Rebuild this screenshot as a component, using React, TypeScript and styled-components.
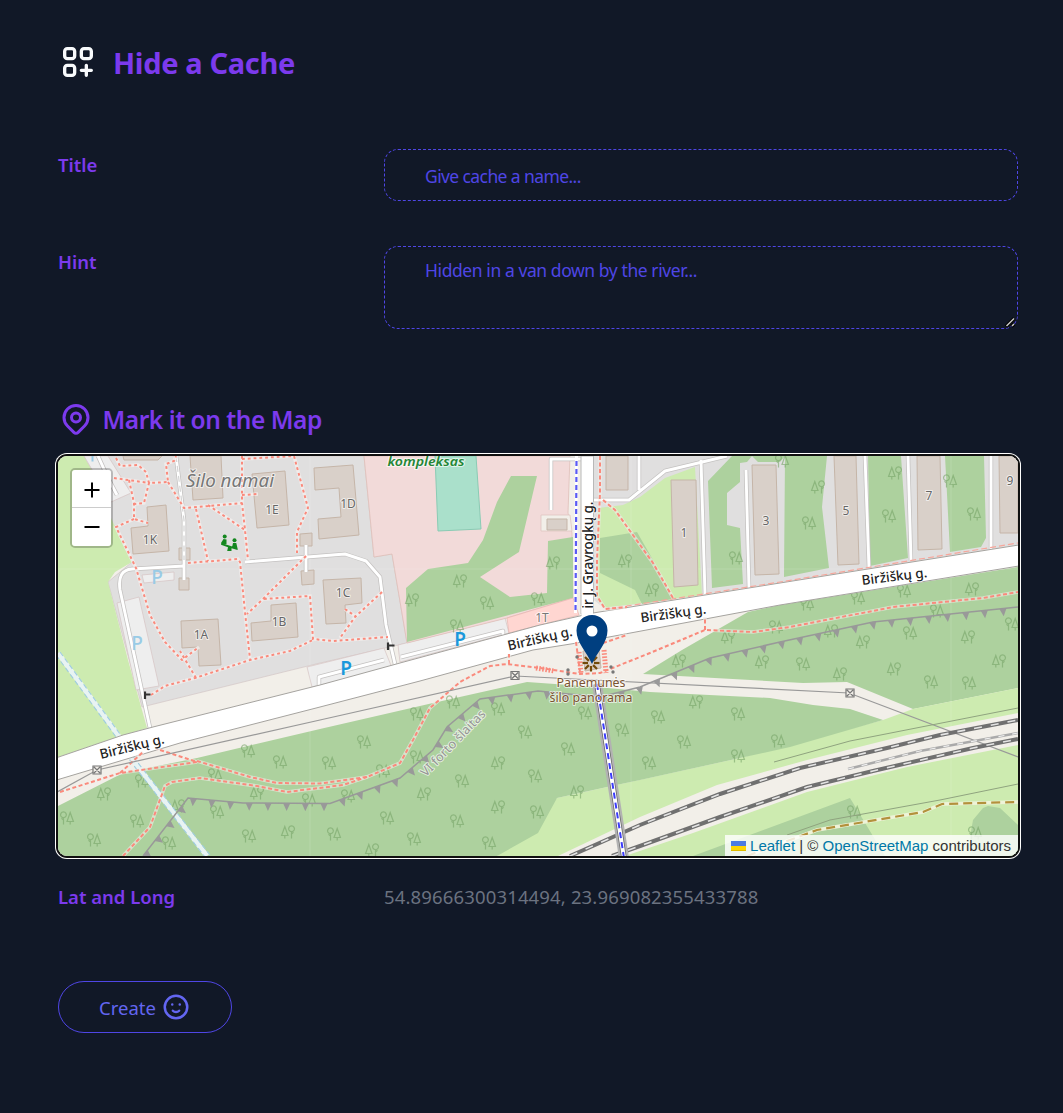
import React from "react";
import styled, { createGlobalStyle } from "styled-components";

const GlobalStyle = createGlobalStyle`
  *, *::before, *::after { box-sizing: border-box; }
  body {
    margin: 0;
    background: #111827;
    font-family: "Noto Sans", "Open Sans", sans-serif;
  }
`;

const Page = styled.main`
  width: 1063px;
  min-height: 1113px;
  padding: 42px 45px 80px 58px;
  background: #111827;
`;

const Header = styled.header`
  display: flex;
  align-items: center;
  gap: 15px;
  height: 40px;
  color: #f8fafc;
`;

const Title = styled.h1`
  margin: 1px 0 0;
  color: #7c3aed;
  font-size: 29px;
  line-height: 40px;
  font-weight: 700;
  letter-spacing: -0.35px;
`;

const Form = styled.form`
  display: flex;
  flex-direction: column;
  padding-top: 67px;
`;

const Row = styled.div<{ $gap?: number }>`
  display: grid;
  grid-template-columns: 326px 1fr;
  align-items: start;
  margin-bottom: ${(p) => p.$gap ?? 0}px;
`;

const Label = styled.label`
  padding-top: 2px;
  color: #7c3aed;
  font-size: 18.5px;
  line-height: 28px;
  font-weight: 600;
`;

const fieldFont = `
  font-family: "Noto Sans", "Open Sans", sans-serif;
  font-size: 17.5px;
  font-weight: 400;
`;

const TextField = styled.input`
  ${fieldFont}
  width: 100%;
  height: 52px;
  padding: 2px 40px 0;
  border: 1px dashed #4f46e5;
  border-radius: 14px;
  background: transparent;
  color: #4f46e5;
  letter-spacing: -0.6px;
  outline: none;
  &::placeholder { color: #4f46e5; opacity: 1; }
`;

const TextAreaBox = styled.div`
  position: relative;
`;

const TextArea = styled.textarea`
  ${fieldFont}
  display: block;
  width: 100%;
  height: 83px;
  padding: 10px 40px;
  border: 1px dashed #4f46e5;
  border-radius: 14px;
  background: transparent;
  color: #4f46e5;
  line-height: 26px;
  letter-spacing: -0.42px;
  outline: none;
  resize: none;
  &::placeholder { color: #4f46e5; opacity: 1; }
`;

const Grip = styled.svg`
  position: absolute;
  right: 2px;
  bottom: 1px;
  pointer-events: none;
`;

const SectionHead = styled.div`
  display: flex;
  align-items: center;
  gap: 9px;
  height: 36px;
  margin-bottom: 19px;
  color: #7c3aed;
  svg { margin: -1px 0 0 -0.5px; }
`;

const SectionTitle = styled.h2`
  margin: 1px 0 0;
  font-size: 24.5px;
  line-height: 36px;
  font-weight: 600;
  letter-spacing: -0.46px;
`;

const MapFrame = styled.div`
  position: relative;
  width: 960px;
  height: 400px;
  margin-bottom: 25px;
  border-radius: 9px;
  box-shadow: 0 0 0 2px #101010, 0 0 0 3px #fff;
`;

const MapClip = styled.div`
  height: 400px;
  overflow: hidden;
  border-radius: 9px;
  svg { display: block; }
`;

const ZoomBar = styled.div`
  position: absolute;
  top: 12px;
  left: 12px;
  width: 43px;
  border: 2px solid rgba(0, 0, 0, 0.22);
  border-radius: 5px;
  overflow: hidden;
  background-clip: padding-box;
`;

const ZoomButton = styled.button`
  display: flex;
  align-items: center;
  justify-content: center;
  width: 100%;
  height: 37px;
  padding: 2px 0 0;
  border: 0;
  background: #fff;
  & + & { height: 39px; padding: 0; border-top: 1px solid #ccc; }
`;

const Attribution = styled.div`
  position: absolute;
  right: 0;
  bottom: 0;
  display: flex;
  align-items: center;
  height: 21px;
  padding: 0 7px 0 6px;
  border-bottom-right-radius: 9px;
  background: rgba(255, 255, 255, 0.8);
  color: #333;
  font-family: "Liberation Sans", Arial, sans-serif;
  font-size: 15px;
  white-space: pre;
  a { color: #0078a8; text-decoration: none; }
  svg { margin-right: 4px; }
`;

const Coordinates = styled.output`
  padding-top: 2px;
  color: #6b7280;
  font-size: 18.5px;
  line-height: 28px;
  letter-spacing: 0.15px;
`;

const CreateButton = styled.button`
  display: flex;
  align-items: center;
  align-self: flex-start;
  gap: 5px;
  width: 174px;
  height: 52px;
  padding: 0 40px;
  border: 1px solid #4f46e5;
  border-radius: 26px;
  background: transparent;
  color: #6366f1;
  font-family: "Noto Sans", "Open Sans", sans-serif;
  font-size: 18.5px;
  white-space: nowrap;
  svg { flex: none; }
`;

type Pt = [number, number];

const ridge: Pt[] = [
  [143, 856], [188, 798], [243, 803], [330, 803.5], [400, 778], [433, 750], [447, 727],
  [480, 699], [538, 691], [600, 697], [640, 687], [710, 658], [780, 642], [873, 622], [1018, 607],
];

function ridgeTeeth(points: Pt[], step: number): string {
  let out = "";
  let next = 4;
  let travelled = 0;
  for (let i = 1; i < points.length; i++) {
    const [ax, ay] = points[i - 1];
    const [bx, by] = points[i];
    const len = Math.hypot(bx - ax, by - ay);
    const ux = (bx - ax) / len;
    const uy = (by - ay) / len;
    while (next <= travelled + len) {
      const d = next - travelled;
      const x = ax + ux * d;
      const y = ay + uy * d;
      out += `M${x - ux * 3.6} ${y - uy * 3.6}L${x + ux * 3.6} ${y + uy * 3.6}L${x - uy * 7.8} ${y + ux * 7.8}Z`;
      next += step;
    }
    travelled += len;
  }
  return out;
}

/* Round crown first */
const treesA: Pt[] = [
  [487, 603], [457, 626], [538, 599], [736, 558], [809, 523], [889, 516], [950, 481], [974, 514],
  [782, 461], [807, 604], [858, 598], [904, 591], [937, 611], [776, 627], [910, 633], [1012, 624],
  [248, 751], [280, 762], [142, 781], [215, 775], [67, 818], [137, 821], [217, 812], [309, 800],
  [249, 836], [94, 840], [169, 843], [364, 742], [329, 763], [417, 714], [453, 702], [498, 709],
  [525, 732], [568, 749], [585, 713], [622, 730], [417, 757], [383, 771], [462, 781], [535, 776],
  [348, 796], [537, 812], [457, 821], [387, 818], [334, 834], [414, 839], [489, 843], [803, 664],
  [931, 682], [969, 683], [658, 717], [738, 714], [684, 742], [778, 741], [649, 763], [738, 756],
  [854, 812], [975, 833],
];

/* Pointed crown first */
const treesB: Pt[] = [
  [460, 581], [412, 600], [553, 563], [625, 561], [652, 590], [728, 637], [679, 661], [818, 487],
  [895, 473], [972, 589], [831, 631], [863, 642], [968, 637], [104, 794], [178, 806], [257, 793],
  [288, 832], [498, 763], [424, 794], [498, 807], [372, 850], [577, 792], [762, 662], [840, 674],
  [894, 669], [999, 661], [696, 702],
];

const treePath = "M-3.5 6.5V-.5M-3.5 2L-5.5 .3M-3.5 -.3a2.900 2.900 0 1 0 -.1 0M3.200 6.500V3.500M0 3.500L3.200 -5.500L6.400 3.500Z";

const buildings: string[] = [
  "M123 456H162L158 460L124 460Z",
  "M190 456H221L223 498L193 500Z",
  "M252 474L285 471L289 525L257 528Z",
  "M314 468L353 465L359 535L319 539L318 519L341 517L339 488L315 490Z",
  "M147 507L166 505L169 551L133 554L131 528L148 526Z",
  "M179 548H190V560H179ZM179 578H189V590H179Z",
  "M300 534L312 533V546H300ZM301 571L314 570V584L302 585Z",
  "M323 580L361 578L362 603L345 605L346 623L326 624Z",
  "M271 605L296 603L298 637L252 641L251 623L271 621Z",
  "M181 621L218 619L221 665L199 666L198 647L182 648Z",
  "M547 519H567V530H547Z",
  "M606 456H628V490H606Z",
  "M671 480H696L698 585L674 587Z",
  "M752 465H776L779 574L755 575Z",
  "M834 456H856L859 564L838 565Z",
  "M917 456H940L942 549L918 550Z",
  "M999 456H1018V533H1000Z",
];

const dotted: string[] = [
  "M116 458L120 466L138 465L146 472L149 483L168 482L166 464L174 461L176 456",
  "M114 478L149 483L144 503L135 504",
  "M129 480L134 503L134 519L148 523M134 519L116 527L136 568L150 615L165 642L182 660L199 647",
  "M168 482L184 508L242 503M196 509L208 561M208 505L245 530",
  "M242 456L242 503L245 530L248 560",
  "M242 459L294 456L308 508L297 532V553",
  "M242 495L258 494",
  "M188 563L238 559L240 562L245 612L250 659",
  "M306 556L262 600L247 614M264 599L310 596L313 639L333 641L388 637",
  "M382 592L355 617L340 638M345 609L355 616",
  "M151 695L165 686L195 678L250 660L290 651L313 640M196 678L180 651",
];

const footways: string[] = [
  "M60 792L120 773L197 762L157 749M120 773L143 752",
  "M197 761L250 777L277 783L320 783.500L367 777L400 763L413 740L430 708L460 682L490 666L507 664L540 668L580 674L600 673L650 653L705 630L753 632L790 627L893 607L983 598L1018 592",
  "M705 630V617M509 664V654",
  "M123 856L150 827L165 786L172 782L200 778L257 786L287 792L343 785L367 777",
  "M603 500L615 510L653 563L673 598",
  "M600 456L600 493L597 560L597 596L605 609L627 607",
  "M576 642L580 672M603 643L627 635",
];

const serviceRoads: string[] = [
  "M98 456L108 478L117 495",
  "M176 456L184 520L184 580",
  "M150 728L120 590Q117 570 132 569L184 566M245 562L345 554L366 561L380 577L386 625L395 664",
  "M306 545V572",
  "M319 685V677L384 660M401 657L503 631V635",
  "M551 510V459H581",
  "M593 500H629L665 471L727 456M639 456V490",
  "M701 460L705 594M746 470L749 588",
  "M865 456L869 568M908 456L911 561M991 456V549",
];

const railNorth = "M570 856L640 825L720 794L800 768L887 748L940 735L1018 720";
const railSouth = "M612 856L640 846L720 817L807 787L873 771L973 748L1018 739";
const railSiding = "M848 769L920 751L1018 733";

interface MapLabel { x: number; y: number; text: string; size: number; fill: string; rotate?: number; italic?: boolean; weight?: number; width?: number; }

const labels: MapLabel[] = [
  { x: 230, y: 487, text: "Šilo namai", size: 17.5, fill: "#777", italic: true, width: 88 },
  { x: 426, y: 466, text: "kompleksas", size: 12, fill: "#238636", italic: true, weight: 600, width: 77 },
  { x: 150, y: 544, text: "1K", size: 12, fill: "#666" },
  { x: 272, y: 514, text: "1E", size: 12, fill: "#666" },
  { x: 348, y: 508, text: "1D", size: 12, fill: "#666" },
  { x: 343, y: 597, text: "1C", size: 12, fill: "#666" },
  { x: 279, y: 626, text: "1B", size: 12, fill: "#666" },
  { x: 201, y: 639, text: "1A", size: 12, fill: "#666" },
  { x: 542, y: 622, text: "1T", size: 12, fill: "#777" },
  { x: 684, y: 537, text: "1", size: 12, fill: "#666" },
  { x: 766, y: 525, text: "3", size: 12, fill: "#666" },
  { x: 846, y: 515, text: "5", size: 12, fill: "#666" },
  { x: 929, y: 500, text: "7", size: 12, fill: "#666" },
  { x: 1010, y: 485, text: "9", size: 12, fill: "#666" },
  { x: 133, y: 751, text: "Biržiškų g.", size: 13.5, fill: "#222", rotate: -14, weight: 500, width: 66 },
  { x: 541, y: 643, text: "Biržiškų g.", size: 13.5, fill: "#222", rotate: -13, weight: 500, width: 66 },
  { x: 674, y: 618, text: "Biržiškų g.", size: 13.5, fill: "#222", rotate: -8, weight: 500, width: 66 },
  { x: 895, y: 581, text: "Biržiškų g.", size: 13.5, fill: "#222", rotate: -7, weight: 500, width: 66 },
  { x: 593, y: 555, text: "ir J. Gravrogkų g.", size: 13.5, fill: "#222", rotate: -90, weight: 500, width: 107 },
  { x: 456, y: 746, text: "VI forto šlaitas", size: 12.5, fill: "#949494", rotate: -46, width: 87 },
  { x: 591, y: 687, text: "Panemunės", size: 12.5, fill: "#7a5330", width: 69 },
  { x: 591, y: 702, text: "šilo panorama", size: 12.5, fill: "#7a5330", width: 83 },
];

const parking: { x: number; y: number; faded?: boolean }[] = [
  { x: 157, y: 584, faded: true },
  { x: 137, y: 650, faded: true },
  { x: 346, y: 675 },
  { x: 460, y: 646 },
];

function StreetMap() {
  return (
    <svg width="960" height="400" viewBox="58 456 960 400" fontFamily='"Noto Sans", sans-serif'>
      <rect x="58" y="456" width="960" height="400" fill="#f2efe9" />

      {/* Land use */}
      <path d="M84 456H364L374 557L392 554L407 643L320 663L142 707L108 582L132 562L84 470Z" fill="#e0dfdf" stroke="#d3c5c5" strokeWidth=".7" />
      <path d="M58 456H84L97 480L111 518L132 562L115 572L108 582L128 660L147 728L58 757Z" fill="#cdebb0" />
      <path d="M84 456H108L131 493L111 502Z M117 603L139 597L159 686L136 690Z M142 575L174 572V580L144 583Z" fill="#eee" stroke="#d5c3c3" strokeWidth=".7" />
      <path d="M307 667L384 648L392 668L312 687Z M398 645L505 618L509 633L400 662Z" fill="#eee" stroke="#d5c3c3" strokeWidth=".7" />
      <path d="M364 456H570L568 513L572 533L573 598L507 618L407 643L392 554L374 557Z" fill="#f2dad9" stroke="#dfbfb9" strokeWidth=".8" />
      <path d="M541 515H570L572 531L541 531Z" fill="#f2efe9" stroke="#e0c5c0" strokeWidth=".8" />
      <path d="M511 476H537L519 552L480 577L510 597L547 593L548 541L573 537V598L407 642L406 588L428 569L468 563L483 540L497 502Z" fill="#add19e" />
      <path d="M507 618L573 598L579 615L509 633Z" fill="#ffd6d1" stroke="#e8b5b0" strokeWidth=".7" />
      <path d="M435 456H476L481 529L438 531Z" fill="#aae0cb" stroke="#8acbb4" strokeWidth="1" />
      <path d="M594 456H1018V545L780 583L605 609L594 600Z" fill="#e0dfdf" />
      <path d="M598 508L623 505L640 497L665 478L695 467L702 595L605 608L597 600Z" fill="#cdebb0" />
      <path d="M600 538L637 532L653 560L673 599L642 604L635 590L600 573Z" fill="#add19e" />
      <path d="M708 481L732 456H752L747 462L740 463V482L727 493V525L740 528L743 584L712 588Z" fill="#add19e" />
      <path d="M752 456H785L780 462H758Z M785 456H827L822 507L829 568L784 577Z M868 456H901L908 558L870 566Z M945 456H984L986 538L981 547L950 552Z" fill="#add19e" />
      <path d="M748 612L780 605L1018 567V688L913 709L847 682L803 683L643 674L682 650Z" fill="#add19e" />
      <path d="M557 798L740 758L883 720L913 709L1018 688V856H497Z" fill="#cdebb0" />
      <path d="M58 806L123 773L197 758L320 729L433 703L527 682L597 687L650 692L770 698L813 705L850 709L883 720L790 747L740 758L640 780L607 787L557 798L538 833L497 856H58Z" fill="#add19e" />
      <path d="M558 856L640 817L717 785L807 760L907 735L1018 713V745L907 767L807 792L693 833L625 856Z" fill="#f2efe9" />
      <path d="M693 856L850 798L885 856Z M970 856V837L973 820L983 808L988 806L1000 808L1018 825V856Z" fill="#add19e" />

      <g fill="none" stroke="#76a368" strokeOpacity=".6" strokeWidth="1.200">
        {treesA.map(([x, y]) => <path key={`${x}-${y}`} d={treePath} transform={`translate(${x} ${y})`} />)}
        {treesB.map(([x, y]) => <path key={`${x}-${y}`} d={treePath} transform={`translate(${x} ${y}) scale(-1 1)`} />)}
      </g>

      {/* Stream */}
      <path d="M58 653L118 735L133 760L207 856" fill="none" stroke="#e8f3f3" strokeWidth="5" />
      <path d="M56 655L116 737L131 762L205 857M60 652L120 734L135 759L210 855" fill="none" stroke="#9fcce0" strokeWidth="1.100" strokeDasharray="5 3" />
      <path d="M310 456V856M631 456V856M951 456V856M58 569H1018" stroke="#fff" strokeOpacity=".14" strokeWidth="1" />

      {/* Buildings */}
      <g fill="#d9d0c9" stroke="#c5b5a8" strokeWidth="1">
        {buildings.map((d) => <path key={d} d={d} />)}
      </g>

      {/* Service roads */}
      <g fill="none" strokeLinejoin="round">
        {serviceRoads.map((d) => <path key={d} d={d} stroke="#c4c2c1" strokeWidth="4.400" />)}
        {serviceRoads.map((d) => <path key={d} d={d} stroke="#fff" strokeWidth="2.900" />)}
      </g>
      <path d="M176 456L184 520V560" fill="none" stroke="#d3d3d3" strokeWidth="1.200" strokeDasharray="6 4" />

      {/* Streets */}
      <path d="M581 456H593.500V614H581Z" fill="#fff" stroke="#b8b8b8" strokeWidth="1" />
      <path d="M50 760L123 735L153 727L320 685L400 663L540 625L593 613L780 583L1025 544V565L780 605L577 643L533 650L420 681L320 707L180 743L50 782Z" fill="#fff" stroke="#a5a39f" strokeWidth="1" />
      <rect x="581.500" y="606" width="11.500" height="14" fill="#fff" />
      <path d="M608 609L780 582L1018 543" fill="none" stroke="#f6a79c" strokeWidth="1.200" strokeDasharray="6 3" />

      {/* Walking paths */}
      <g fill="none">
        {dotted.map((d) => <path key={d} d={d} stroke="#f4efee" strokeOpacity=".8" strokeWidth="3.400" />)}
        {dotted.map((d) => <path key={d} d={d} stroke="#fa8a7c" strokeWidth="2" strokeDasharray="2.800 3" />)}
        {footways.map((d) => <path key={d} d={d} stroke="#f2efe9" strokeOpacity=".6" strokeWidth="3.600" />)}
        {footways.map((d) => <path key={d} d={d} stroke="#fa8a7c" strokeWidth="2" strokeDasharray="4 2.500" />)}
        <path d="M604 650L606 673M579 652L581 673M536 668L554 671" stroke="#fa8a7c" strokeWidth="5" strokeDasharray="1.600 1.600" />
      </g>
      <path d="M576.500 456L575.500 613" stroke="#fff" strokeWidth="3" />
      <path d="M576.500 461L575.500 613" stroke="#5a5af5" strokeWidth="2.200" strokeDasharray="5 3" />

      {/* Power lines and fences */}
      <path d="M57 792L97 770L320 720L515 676L849 693L1018 757" fill="none" stroke="#999" strokeWidth="1.200" />
      <path d="M774 762L850 741L1018 708M787 835L830 820L940 800L1018 784" fill="none" stroke="#8fa37f" strokeWidth="1" />
      {[[97, 770], [515, 675.5], [850, 693]].map(([x, y]) => (
        <path key={x} d={`M${x - 4} ${y - 4}h8v8h-8zM${x - 3} ${y - 3}l6 6M${x + 3} ${y - 3}l-6 6`} fill="#f2efe9" stroke="#777" strokeWidth="1.200" />
      ))}
      <path d={"M" + ridge.map((p) => p.join(" ")).join("L")} fill="none" stroke="#999" strokeWidth="1.500" />
      <path d={ridgeTeeth(ridge, 18.7)} fill="#999" />

      {/* Railway */}
      <g fill="none">
        {[railNorth, railSouth].map((d) => <path key={d} d={d} stroke="#707070" strokeWidth="4" />)}
        {[railNorth, railSouth].map((d) => <path key={d} d={d} stroke="#e4e4e4" strokeWidth="1.600" strokeDasharray="8 9" />)}
        <path d={railSiding} stroke="#aaa" strokeWidth="2.500" />
        <path d={railSiding} stroke="#eee" strokeWidth="1.200" strokeDasharray="6 8" />
        <path d="M747 856L817 830L923 812L942 804L1018 802" stroke="#eef3d8" strokeWidth="3.500" />
        <path d="M747 856L817 830L923 812L942 804L1018 802" stroke="#b3913c" strokeWidth="2.200" strokeDasharray="9 5" />
      </g>

      {/* Footbridge */}
      <path d="M597 684L624 858" stroke="#b2b2b2" strokeWidth="10" />
      <path d="M597 684L624 858" stroke="#666" strokeWidth="5.500" />
      <path d="M597 684L624 858" stroke="#fff" strokeWidth="4" />
      <path d="M597 684L624 858" stroke="#3c3cfa" strokeWidth="2" strokeDasharray="6 4" />

      {/* Gates and bollards */}
      <path d="M145 691.500V699M144 694.500H150.500M388 642.500V650M387 645.500H394.500" stroke="#333" strokeWidth="2.200" />
      <g fill="#777">
        <circle cx="568" cy="670" r="1.700" /><circle cx="568" cy="674" r="1.700" /><circle cx="577" cy="657" r="1.700" />
        <circle cx="611" cy="667" r="1.700" /><circle cx="613" cy="672" r="1.700" />
      </g>

      {/* Playground seesaw */}
      <g fill="#14871f">
        <circle cx="224.700" cy="536.500" r="2" />
        <circle cx="234.500" cy="540.300" r="2" />
        <path d="M223.500 539L226.500 539.500V544L221.500 544.500L221 543ZM233 543L236.300 543L237.800 549.500L232 547.500ZM221.500 543L237.500 548.300V550L231.500 548.300V551H227.200L228 547.300L221 544.800Z" />
      </g>

      {/* Panorama building and viewpoint */}
      <path d="M583 651L599 649L601 668L585 671Z" fill="#d9d0c9" stroke="#c5b5a8" strokeWidth="1" />
      <g stroke="#734a08" strokeWidth="2.200">
        {[0, 45, 90, 135, 180, 225, 270, 315].map((a) => <path key={a} d="M591 660V654.500" transform={`rotate(${a} 591 663)`} />)}
      </g>

      <path d="M92.500 456V461.500" stroke="#99cbe6" strokeWidth="2" />
      {parking.map((p) => (
        <text key={p.x} x={p.x} y={p.y} textAnchor="middle" fontSize="19" fontWeight={p.faded ? 500 : 600} fill={p.faded ? "#99cbe6" : "#1a98dc"}>P</text>
      ))}
      {labels.map((l) => (
        <text
          key={`${l.x}-${l.y}`}
          x={l.x}
          y={l.y}
          textAnchor="middle"
          fontSize={l.size}
          fontWeight={l.weight ?? 400}
          fontStyle={l.italic ? "italic" : "normal"}
          fill={l.fill}
          stroke="#fff"
          strokeOpacity=".65"
          strokeWidth="2"
          paintOrder="stroke"
          strokeLinejoin="round"
          textLength={l.width}
          lengthAdjust="spacingAndGlyphs"
          transform={l.rotate ? `rotate(${l.rotate} ${l.x} ${l.y})` : undefined}
        >
          {l.text}
        </text>
      ))}

      {/* Cache marker */}
      <path d="M592 664C587 652 576.500 643 576.500 630.500A15.500 15.500 0 0 1 607.500 630.500C607.500 643 597 652 592 664Z" fill="#003f80" />
      <circle cx="592" cy="631" r="5.500" fill="#fff" />
    </svg>
  );
}

const strokeIcon = {
  viewBox: "0 0 24 24",
  fill: "none",
  stroke: "currentColor",
  strokeWidth: 2,
  strokeLinecap: "round" as const,
  strokeLinejoin: "round" as const,
};

export default function App() {
  return (
    <>
      <GlobalStyle />
      <Page>
        <Header>
          <svg width="40" height="40" {...strokeIcon}>
            <rect x="4" y="4" width="6" height="6" rx="1.600" />
            <rect x="14" y="4" width="6" height="6" rx="1.600" />
            <rect x="4" y="14" width="6" height="6" rx="1.600" />
            <path d="M14 17h6M17 14v6" />
          </svg>
          <Title>Hide a Cache</Title>
        </Header>
        <Form onSubmit={(e) => e.preventDefault()}>
          <Row $gap={45}>
            <Label htmlFor="title">Title</Label>
            <TextField id="title" placeholder="Give cache a name..." />
          </Row>
          <Row $gap={72}>
            <Label htmlFor="hint">Hint</Label>
            <TextAreaBox>
              <TextArea id="hint" placeholder="Hidden in a van down by the river..." />
              <Grip width="11" height="11" viewBox="0 0 11 11" fill="none">
                <path d="M1 9.500L9 1.500M6.500 9.500L9 7" stroke="#000" strokeWidth="3.400" />
                <path d="M1.500 9L9 1.500M7 9L9 7" stroke="#c8c8c8" strokeWidth="1.500" />
              </Grip>
            </TextAreaBox>
          </Row>
          <SectionHead>
            <svg width="36" height="36" {...strokeIcon}>
              <circle cx="12" cy="11" r="3" />
              <path d="M17.657 16.657l-4.243 4.243a2 2 0 0 1-2.827 0l-4.244-4.243a8 8 0 1 1 11.314 0z" />
            </svg>
            <SectionTitle>Mark it on the Map</SectionTitle>
          </SectionHead>
          <MapFrame>
            <MapClip><StreetMap /></MapClip>
            <ZoomBar>
              <ZoomButton type="button" aria-label="Zoom in">
                <svg width="16" height="16"><path d="M8 .5v15M.5 8h15" stroke="#000" strokeWidth="2" /></svg>
              </ZoomButton>
              <ZoomButton type="button" aria-label="Zoom out">
                <svg width="16" height="16"><path d="M.5 8h15" stroke="#000" strokeWidth="2" /></svg>
              </ZoomButton>
            </ZoomBar>
            <Attribution>
              <svg width="15" height="10" viewBox="0 0 15 10"><path fill="#4c7be1" d="M0 0h15v5H0z" /><path fill="#ffd500" d="M0 5h15v5H0z" /><path fill="#e0bc00" d="M0 9h15v1H0z" /></svg>
              <a href="#leaflet">Leaflet</a> | © <a href="#osm">OpenStreetMap</a> contributors
            </Attribution>
          </MapFrame>
          <Row $gap={70}>
            <Label as="span">Lat and Long</Label>
            <Coordinates>54.89666300314494, 23.969082355433788</Coordinates>
          </Row>
          <CreateButton type="submit">
            Create
            <svg width="30" height="30" {...strokeIcon}>
              <circle cx="12" cy="12" r="9" />
              <path d="M9 10h.01M15 10h.01M9.500 15a3.500 3.500 0 0 0 5 0" />
            </svg>
          </CreateButton>
        </Form>
      </Page>
    </>
  );
}
